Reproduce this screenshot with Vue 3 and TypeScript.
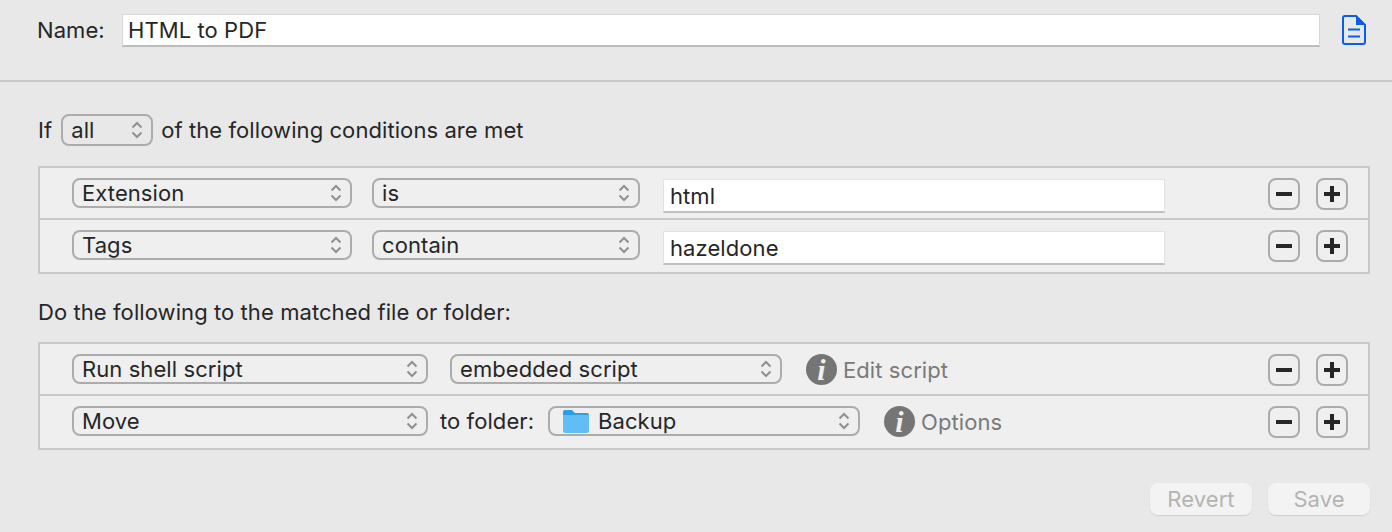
<script setup lang="ts">
interface Part { kind: 'select' | 'field' | 'label' | 'info'; text: string; w?: number; gap?: number; folder?: boolean }
const chevron = 'M-4.5 -2.500 L0 -7 L4.500 -2.500 M-4.500 2.500 L0 7 L4.500 2.500'
const conditions: Part[][] = [
  [
    { kind: 'select', text: 'Extension', w: 280 },
    { kind: 'select', text: 'is', w: 268, gap: 20 },
    { kind: 'field', text: 'html', w: 502, gap: 23 },
  ],
  [
    { kind: 'select', text: 'Tags', w: 280 },
    { kind: 'select', text: 'contain', w: 268, gap: 20 },
    { kind: 'field', text: 'hazeldone', w: 502, gap: 23 },
  ],
]
const actions: Part[][] = [
  [
    { kind: 'select', text: 'Run shell script', w: 356 },
    { kind: 'select', text: 'embedded script', w: 332, gap: 22 },
    { kind: 'info', text: 'Edit script', gap: 24 },
  ],
  [
    { kind: 'select', text: 'Move', w: 356 },
    { kind: 'label', text: 'to folder:', w: 96, gap: 12 },
    { kind: 'select', text: 'Backup', w: 312, gap: 12, folder: true },
    { kind: 'info', text: 'Options', gap: 24 },
  ],
]
</script>

<template>
  <div class="page">
    <header class="head">
      <span class="name-label">Name:</span>
      <div class="name-field">HTML to PDF</div>
      <svg class="doc" width="24" height="30" viewBox="0 0 24 30" fill="none">
        <path d="M3 1H14L23 10V27a2 2 0 0 1-2 2H3a2 2 0 0 1-2-2V3a2 2 0 0 1 2-2Z" stroke="#0a5fe6" stroke-width="2" />
        <path d="M14 0L24 10H14Z" fill="#0a5fe6" />
        <path d="M6 14.500H18M6 21.500H18" stroke="#0a5fe6" stroke-width="2" />
      </svg>
    </header>

    <div class="intro">
      <span>If</span>
      <div class="select small">
        <span>all</span>
        <svg class="chev" width="12" height="18" viewBox="-6 -9 12 18"><path :d="chevron" /></svg>
      </div>
      <span>of the following conditions are met</span>
    </div>

    <section class="table">
      <div v-for="(row, i) in conditions" :key="i" class="row">
        <template v-for="p in row" :key="p.text">
          <div v-if="p.kind === 'select'" class="select" :style="{ width: p.w + 'px', marginLeft: (p.gap || 0) + 'px' }">
            <span>{{ p.text }}</span>
            <svg class="chev" width="12" height="18" viewBox="-6 -9 12 18"><path :d="chevron" /></svg>
          </div>
          <div v-else class="field" :style="{ width: p.w + 'px', marginLeft: (p.gap || 0) + 'px' }">{{ p.text }}</div>
        </template>
        <div class="pm">
          <button class="sq"><svg width="20" height="20" viewBox="0 0 20 20"><rect x="2" y="8" width="16" height="4" /></svg></button>
          <button class="sq"><svg width="20" height="20" viewBox="0 0 20 20"><path d="M8 2h4v6h6v4h-6v6H8v-6H2V8h6Z" /></svg></button>
        </div>
      </div>
    </section>

    <div class="do-line">Do the following to the matched file or folder:</div>

    <section class="table second">
      <div v-for="(row, i) in actions" :key="i" class="row">
        <template v-for="p in row" :key="p.text">
          <div v-if="p.kind === 'select'" class="select" :style="{ width: p.w + 'px', marginLeft: (p.gap || 0) + 'px' }">
            <svg v-if="p.folder" class="folder" width="26" height="24" viewBox="0 0 26 24">
              <path d="M0 3a2 2 0 0 1 2-2h7l3 3h12a2 2 0 0 1 2 2v3H0Z" fill="#2a9fe8" />
              <path d="M0 6h26v16a2 2 0 0 1-2 2H2a2 2 0 0 1-2-2Z" fill="#62bdf5" />
            </svg>
            <span>{{ p.text }}</span>
            <svg class="chev" width="12" height="18" viewBox="-6 -9 12 18"><path :d="chevron" /></svg>
          </div>
          <span v-else-if="p.kind === 'label'" class="lbl" :style="{ width: p.w + 'px', marginLeft: (p.gap || 0) + 'px' }">{{ p.text }}</span>
          <div v-else class="info" :style="{ marginLeft: (p.gap || 0) + 'px' }">
            <span class="i-badge">i</span>
            <span class="info-text">{{ p.text }}</span>
          </div>
        </template>
        <div class="pm">
          <button class="sq"><svg width="20" height="20" viewBox="0 0 20 20"><rect x="2" y="8" width="16" height="4" /></svg></button>
          <button class="sq"><svg width="20" height="20" viewBox="0 0 20 20"><path d="M8 2h4v6h6v4h-6v6H8v-6H2V8h6Z" /></svg></button>
        </div>
      </div>
    </section>

    <footer class="foot">
      <button class="btn">Revert</button>
      <button class="btn">Save</button>
    </footer>
  </div>
</template>

<style>
html, body { margin: 0; background: #e8e8e8; }
</style>

<style scoped>
.page {
  width: 1392px;
  height: 532px;
  overflow: hidden;
  background: #e8e8e8;
  color: #262626;
  font-family: Inter, "Noto Sans", sans-serif;
  font-size: 22px;
  letter-spacing: 0.08px;
  box-sizing: border-box;
}
.head {
  height: 82px;
  box-sizing: border-box;
  padding: 14px 26px 0 37px;
  display: flex;
  align-items: flex-start;
  border-bottom: 2px solid #c8c8c8;
}
.name-label { line-height: 33px; width: 85px; flex: none; }
.name-field {
  width: 1198px;
  height: 33px;
  box-sizing: border-box;
  background: #fff;
  border: 1px solid #d9d9d9;
  border-bottom: 2px solid #bcbcbc;
  padding-left: 5px;
  line-height: 30px;
  flex: none;
}
.doc { margin-left: 22px; margin-top: 1px; flex: none; }
.intro {
  display: flex;
  align-items: center;
  gap: 8px;
  margin: 32px 0 0 38px;
  height: 32px;
}
.select {
  height: 30px;
  box-sizing: border-box;
  border: 2px solid #acacac;
  border-radius: 8px;
  display: flex;
  align-items: center;
  padding: 0 8px;
  flex: none;
}
.select > span { flex: 1; }
.select.small { width: 92px; height: 32px; margin-left: 1px; }
.chev { flex: none; }
.chev path { fill: none; stroke: #909090; stroke-width: 2; }
.folder { flex: none; margin: 0 9px 0 5px; }
.table {
  margin: 20px 22px 0 38px;
  border: 2px solid #c8c8c8;
  background: #efefef;
}
.table.second { margin-top: 17px; }
.do-line { margin: 26px 0 0 38px; line-height: 25px; }
.row {
  height: 50px;
  display: flex;
  align-items: center;
  padding-left: 32px;
  padding-right: 20px;
}
.row + .row { border-top: 2px solid #c8c8c8; padding-bottom: 2px; }
.field {
  height: 34px;
  box-sizing: border-box;
  background: #fff;
  border: 1px solid #e2e2e2;
  border-bottom: 2px solid #c0c0c0;
  padding-left: 6px;
  line-height: 32px;
  flex: none;
  margin-top: 6px;
}
.lbl { flex: none; }
.info { display: flex; align-items: center; gap: 6px; flex: none; }
.i-badge {
  width: 31px;
  height: 31px;
  border-radius: 50%;
  background: #757575;
  color: #f0f0f0;
  font-family: "Liberation Serif", serif;
  font-style: italic;
  font-weight: 700;
  font-size: 30px;
  line-height: 31px;
  text-align: center;
}
.info-text { color: #7a7a7a; padding-top: 2px; }
.pm { margin-left: auto; display: flex; gap: 16px; margin-top: 2px; }
.sq {
  width: 32px;
  height: 32px;
  padding: 0;
  background: transparent;
  border: 2px solid #acacac;
  border-radius: 8px;
  display: flex;
  align-items: center;
  justify-content: center;
}
.sq svg { fill: #262626; }
.foot {
  display: flex;
  justify-content: flex-end;
  gap: 16px;
  margin: 33px 22px 0 0;
}
.btn {
  width: 102px;
  height: 32px;
  padding: 0;
  background: #f3f3f3;
  border: none;
  border-radius: 8px;
  box-shadow: 0 1px 1px rgba(0, 0, 0, 0.12);
  color: #b4b4b4;
  font: inherit;
  letter-spacing: 0.08px;
}
</style>
